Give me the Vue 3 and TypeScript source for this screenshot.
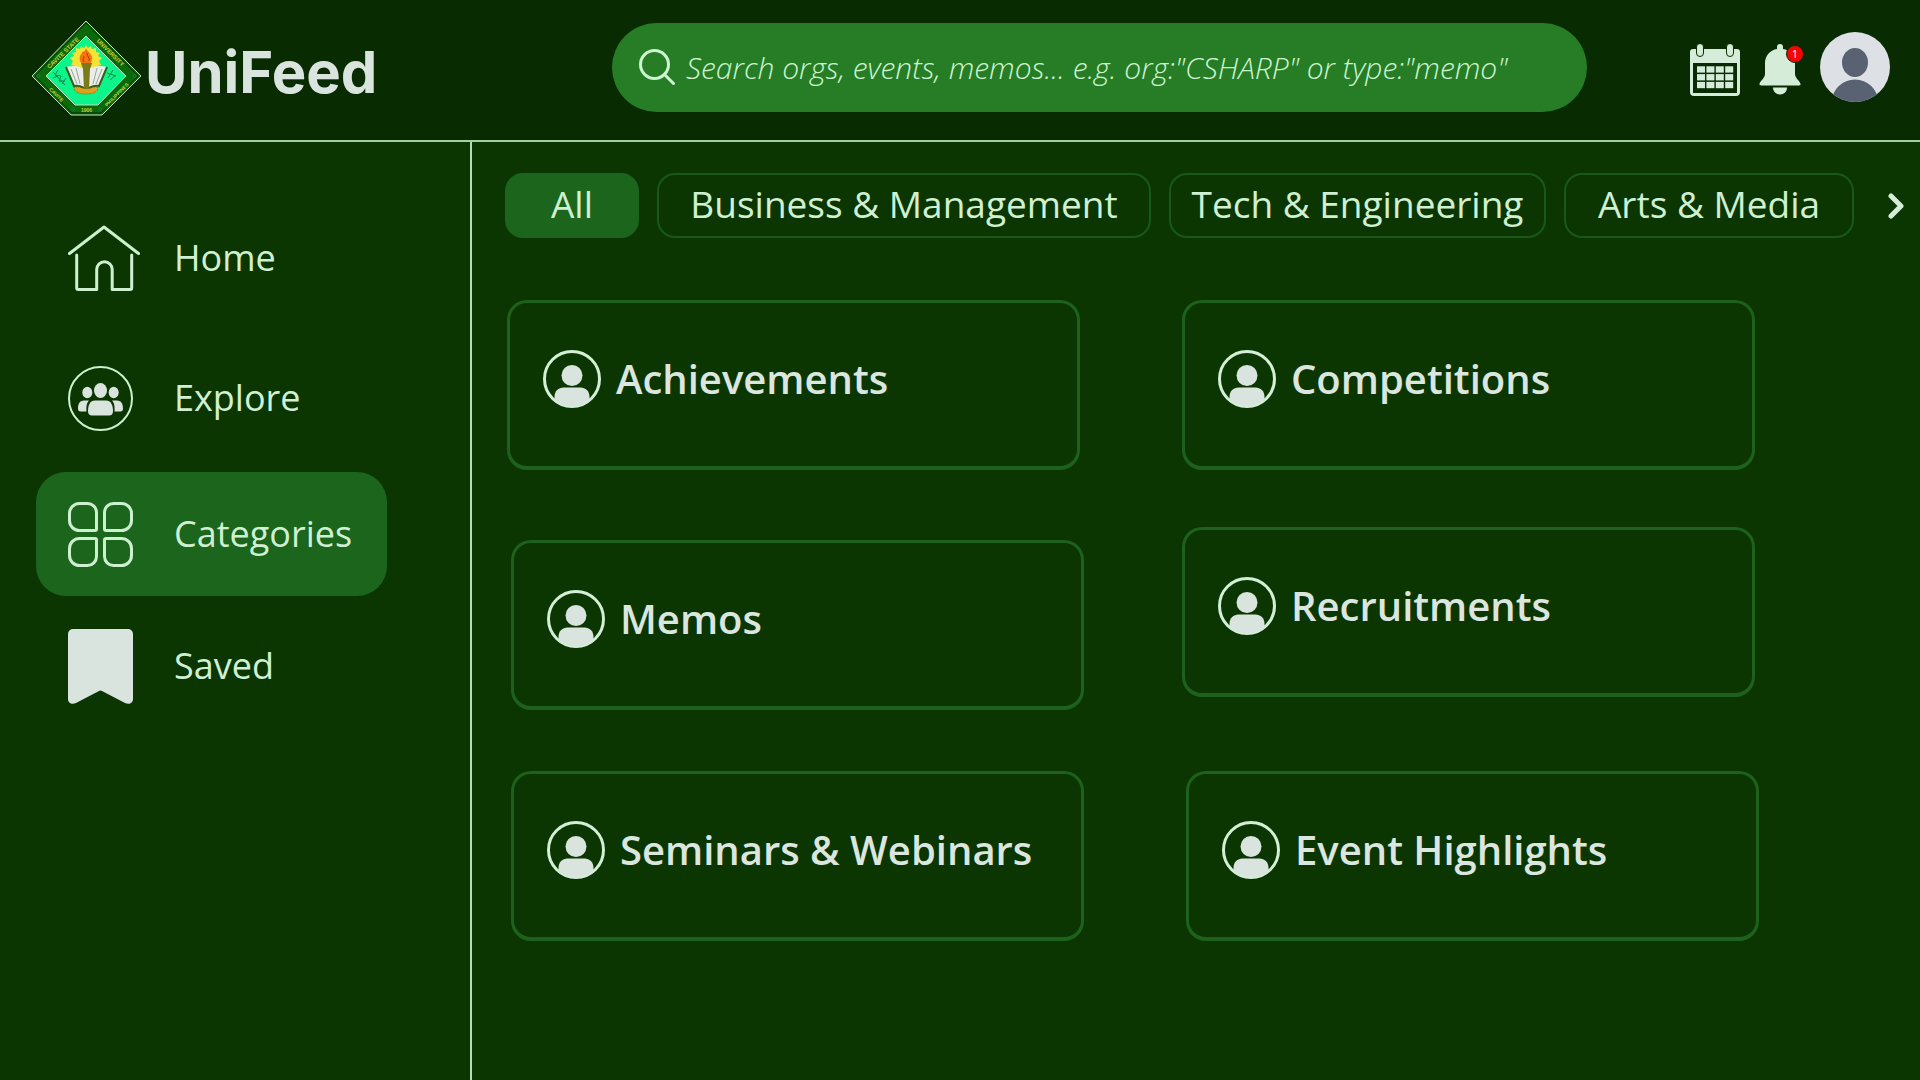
<script setup lang="ts">
import { ref } from 'vue'

interface NavItem {
  id: string
  label: string
}

interface Chip {
  label: string
  size: string
}

interface Category {
  label: string
  place: string
}

const query = ref('')
const activeNav = ref('categories')
const activeChip = ref('All')

const navItems: NavItem[] = [
  { id: 'home', label: 'Home' },
  { id: 'explore', label: 'Explore' },
  { id: 'categories', label: 'Categories' },
  { id: 'saved', label: 'Saved' },
]

const chips: Chip[] = [
  { label: 'All', size: 'xs' },
  { label: 'Business & Management', size: 'lg' },
  { label: 'Tech & Engineering', size: 'md' },
  { label: 'Arts & Media', size: 'sm' },
]

const categories: Category[] = [
  { label: 'Achievements', place: 'near' },
  { label: 'Competitions', place: 'near' },
  { label: 'Memos', place: 'far low' },
  { label: 'Recruitments', place: 'near' },
  { label: 'Seminars & Webinars', place: 'far low' },
  { label: 'Event Highlights', place: 'far low' },
]
</script>

<template>
  <div class="page">
    <header class="topbar">
      <a class="brand" href="#">
        <svg class="seal" viewBox="0 0 111 97" aria-hidden="true">
          <path d="M55 1 110 56 71 95H40L1 56Z" fill="#0a6a0a" stroke="#c9dcc4" stroke-width="1" />
          <path d="M55 3 107 56 70 93H41L4 56Z" fill="none" stroke="#042a04" stroke-width="1" />
          <path d="M55 16 95 56 67 85H44L15 56Z" fill="#0bf58a" stroke="#c9dcc4" stroke-width="1" />
          <g class="seal-text">
            <text transform="translate(33.500 34.500) rotate(-44)">CAVITE STATE</text>
            <text transform="translate(78 34) rotate(45)">UNIVERSITY</text>
            <text transform="translate(24 76) rotate(45)" class="small">CAVITE</text>
            <text transform="translate(87 76) rotate(-45)" class="small">PHILIPPINES</text>
            <text x="55.500" y="91.500" class="small">1906</text>
          </g>
          <g fill="none" stroke="#1a7a3a" stroke-width="1">
            <circle cx="7.500" cy="56" r="1.500" /><circle cx="103.500" cy="56" r="1.500" />
            <circle cx="42" cy="89" r="1.500" /><circle cx="69" cy="89" r="1.500" />
            <path d="m22 52 12 13M27 50l-3 5 6 1-2 5 6 0M22 58l5-2M35 58l-4 6M82 50l-5 8M76 53l9 3M79 60l6-5" stroke="#0f8a4a" />
          </g>
          <path d="M55 25l2 3 3-2 1 3 4-1v4l4 1-2 3 4 2-3 3 2 4-4 1v3l-5 0-6 3-6-3-5 0v-3l-4-1 2-4-3-3 4-2-2-3 4-1v-4l4 1 1-3 3 2Z" fill="#f5e234" />
          <path d="M55 28c1 4 6 5 6 10 0 3-1 5-2 6h-8c-2-2-3-5-2-8 1-2 2-2 2-4 2 0 3-1 4-4Z" fill="#f2760f" />
          <path d="M56 33c0 4 3 4 2 8M53 36c0 3-2 3 0 6" fill="none" stroke="#c92a0a" stroke-width="1" />
          <path d="M43 67h24c0 5-5 7-12 7s-12-2-12-7Z" fill="#e0a01c" stroke="#8a6a10" stroke-width="1" stroke-dasharray="1 1" />
          <path d="M35 47c7-2 13-1 18 2v18c-3-2-7-2-10-1ZM76 47c-7-2-13-1-18 2v18c3-2 7-2 10-1Z" fill="#e9eee9" />
          <path d="m35 47 8 19c4-1 7 0 10 2M76 47l-8 19c-4-1-7 0-10 2" fill="none" stroke="#3f5a1a" stroke-width="2" />
          <path d="m40 49 6 15M45 48l4 16M71 49l-6 15M66 48l-4 16" stroke="#9aa59a" stroke-width="1" />
          <path d="M50 43h11l-2 6-1 20h-5l-1-20Z" fill="#7a7a1c" />
        </svg>
        <span class="brand-name">UniFeed</span>
      </a>

      <form class="search" role="search" @submit.prevent>
        <label for="search-input" class="search-label" aria-label="Search">
          <svg viewBox="0 0 36 37" class="search-icon" aria-hidden="true">
            <circle cx="15.500" cy="15.500" r="14" />
            <path d="m25.500 25.500 9 9" />
          </svg>
        </label>
        <input
          id="search-input"
          v-model="query"
          type="text"
          placeholder="Search orgs, events, memos... e.g. org:&quot;CSHARP&quot; or type:&quot;memo&quot;"
        />
      </form>

      <div class="actions">
        <button type="button" class="icon-button small" aria-label="Calendar">
          <svg width="50" height="52" viewBox="0 0 50 52" aria-hidden="true">
            <path d="M3 5h44a3 3 0 0 1 3 3v11H0V8a3 3 0 0 1 3-3Z" fill="#d5ecd9" />
            <path d="M0 17h3v32h44V17h3v31a4 4 0 0 1-4 4H4a4 4 0 0 1-4-4Z" fill="#d5ecd9" />
            <g fill="#d5ecd9" stroke="#092b01" stroke-width="1">
              <rect x="6.500" y="-.500" width="7" height="13" rx="3.500" />
              <rect x="36.500" y="-.500" width="7" height="13" rx="3.500" />
            </g>
            <g fill="#d5ecd9">
              <template v-for="row in 3" :key="row">
                <rect
                  v-for="col in 4"
                  :key="col"
                  :x="7 + (col - 1) * 9.4"
                  :y="22.3 + (row - 1) * 7.8"
                  width="8"
                  height="6.300"
                />
              </template>
            </g>
          </svg>
        </button>
        <button type="button" class="icon-button small" aria-label="Notifications, 1 unread">
          <svg width="42" height="52" viewBox="0 0 42 52" aria-hidden="true">
            <path d="M18 5V3a3 3 0 0 1 6 0v2c7 1 12 7 12 14v11c0 4 5 7 5.500 10 .2 1-.5 1.500-1.500 1.500H2C1 41.500.3 41 .5 40 1 37 6 34 6 30V19c0-7 5-13 12-14Z" fill="#d5ecd9" />
            <path d="M14 43.500h14c0 4-3 7-7 7s-7-3-7-7Z" fill="#d5ecd9" />
          </svg>
          <span class="badge">1</span>
        </button>
        <button type="button" class="icon-button" aria-label="Profile">
          <svg width="70" height="70" viewBox="0 0 70 70" aria-hidden="true">
            <clipPath id="avatar-clip"><circle cx="35" cy="35" r="35" /></clipPath>
            <g clip-path="url(#avatar-clip)">
              <rect width="70" height="70" fill="#dde1e6" />
              <ellipse cx="35" cy="30.500" rx="13" ry="14.500" fill="#596273" />
              <ellipse cx="35" cy="69.500" rx="23" ry="22" fill="#596273" />
            </g>
          </svg>
        </button>
      </div>
    </header>

    <div class="body">
      <nav class="sidebar" aria-label="Main">
        <a
          v-for="item in navItems"
          :key="item.id"
          href="#"
          class="nav-link"
          :class="{ active: item.id === activeNav }"
          @click.prevent="activeNav = item.id"
        >
          <span class="nav-icon">
            <svg v-if="item.id === 'home'" class="line" width="72" height="66" viewBox="0 0 72 66" aria-hidden="true">
              <path d="M1.500 28.500 36 2l34.500 26.500M8.700 30v33a1.500 1.500 0 0 0 1.500 1.500h18.500v-20a7.700 7.700 0 0 1 15.500 0v20h18a1.500 1.500 0 0 0 1.500-1.500V30" />
            </svg>
            <svg v-else-if="item.id === 'explore'" width="65" height="65" viewBox="0 0 65 65" aria-hidden="true">
              <circle cx="32.500" cy="32.500" r="31.500" fill="none" stroke="#cdf0cf" stroke-width="2" />
              <g fill="#dae4df">
                <ellipse cx="19.300" cy="26.500" rx="5" ry="5.800" />
                <ellipse cx="45.700" cy="26.500" rx="5" ry="5.800" />
                <ellipse cx="32.500" cy="24.500" rx="6.500" ry="7.500" />
                <path d="M21 34.500c-2 2-3 5-2.500 11h-6c-1.500 0-2.500-1-2.500-2.500 0-5 1.500-8.500 6-8.500ZM44 34.500c2 2 3 5 2.500 11h6c1.500 0 2.500-1 2.500-2.500 0-5-1.500-8.500-6-8.500Z" />
                <path d="M27 34.500h11c5 0 7 5 7 10.500 0 3-1.500 4.500-4 4.500H24c-2.500 0-4-1.500-4-4.500 0-5.500 2-10.500 7-10.500Z" />
              </g>
            </svg>
            <svg v-else-if="item.id === 'categories'" class="line" width="65" height="65" viewBox="0 0 65 65" aria-hidden="true">
              <path d="M11.500 1.500h8a9 9 0 0 1 9 9v16.500a1.500 1.500 0 0 1-1.500 1.500H11.500a10 10 0 0 1-10-10v-7a10 10 0 0 1 10-10Z" />
              <path d="M53.500 1.500h-8a9 9 0 0 0-9 9v16.500a1.500 1.500 0 0 0 1.500 1.500h15.500a10 10 0 0 0 10-10v-7a10 10 0 0 0-10-10Z" />
              <path d="M11.500 63.500h8a9 9 0 0 0 9-9V38a1.500 1.500 0 0 0-1.500-1.500H11.500a10 10 0 0 0-10 10v7a10 10 0 0 0 10 10Z" />
              <path d="M53.500 63.500h-8a9 9 0 0 1-9-9V38a1.500 1.500 0 0 1 1.500-1.500h15.500a10 10 0 0 1 10 10v7a10 10 0 0 1-10 10Z" />
            </svg>
            <svg v-else width="65" height="75" viewBox="0 0 65 75" aria-hidden="true">
              <path d="M5 0h55a5 5 0 0 1 5 5v65c0 4-4 6-8 4L34 62q-1.500-1-3 0L8 74c-4 2-8 0-8-4V5a5 5 0 0 1 5-5Z" fill="#dae4df" />
            </svg>
          </span>
          <span>{{ item.label }}</span>
        </a>
      </nav>

      <main class="content">
        <div class="chips">
          <button
            v-for="chip in chips"
            :key="chip.label"
            type="button"
            class="chip"
            :class="[chip.size, { active: chip.label === activeChip }]"
            @click="activeChip = chip.label"
          >
            {{ chip.label }}
          </button>
          <button type="button" class="next" aria-label="More categories">
            <svg width="16" height="26" viewBox="0 0 16 26" aria-hidden="true">
              <path d="m3 3 10 10L3 23" fill="none" stroke="#d5ecd9" stroke-width="5" stroke-linecap="round" stroke-linejoin="round" />
            </svg>
          </button>
        </div>

        <div class="cards">
          <a v-for="category in categories" :key="category.label" href="#" class="card" :class="category.place">
            <svg width="58" height="58" viewBox="0 0 58 58" aria-hidden="true">
              <circle cx="29" cy="29" r="27.500" fill="none" stroke="#d3efd6" stroke-width="3" />
              <circle cx="29" cy="25.500" r="10.500" fill="#dae4df" />
              <path d="M11.500 50v-3c0-6 4-9.500 9-9.500h17c5 0 9 3.500 9 9.500v3a27.500 27.500 0 0 1-35 0Z" fill="#dae4df" />
            </svg>
            <span>{{ category.label }}</span>
          </a>
        </div>
      </main>
    </div>
  </div>
</template>

<style>
body {
  margin: 0;
  background: #0b3601;
}
</style>

<style scoped>
.page {
  display: flex;
  flex-direction: column;
  min-height: 100vh;
  background: #0b3601;
  color: #cff0d2;
  font-family: "Open Sans", "Noto Sans", sans-serif;
}

.page *,
.page {
  box-sizing: border-box;
}

a {
  color: inherit;
  text-decoration: none;
}

button {
  font: inherit;
  color: inherit;
  padding: 0;
  background: none;
  border: 0;
  cursor: pointer;
}

svg {
  display: block;
  flex: none;
}

.topbar {
  display: flex;
  align-items: flex-start;
  height: 142px;
  padding: 0 30px 0 31px;
  background: #092b01;
  border-bottom: 2px solid #a5cfa3;
}

.brand {
  display: flex;
  align-items: flex-end;
  flex: 0 0 581px;
  gap: 3px;
  padding-top: 20px;
}

.seal {
  width: 111px;
  height: 97px;
}

.seal-text {
  font-family: "Liberation Sans", sans-serif;
  font-size: 6px;
  font-weight: 700;
  fill: #c5cf3a;
  text-anchor: middle;
}

.seal-text .small {
  font-size: 5px;
}

.brand-name {
  font-family: Inter, sans-serif;
  font-size: 58px;
  line-height: 90px;
  font-weight: 700;
  color: #dae4df;
}

.search {
  display: flex;
  align-items: center;
  flex: 1;
  min-width: 0;
  height: 89px;
  margin-top: 23px;
  padding: 0 44px 0 27px;
  border-radius: 45px;
  background: #267d26;
}

.search-icon {
  width: 36px;
  height: 37px;
  fill: none;
  stroke: #cdf5d0;
  stroke-width: 3;
  stroke-linecap: round;
}

.search input {
  flex: 1;
  min-width: 0;
  margin-left: 11px;
  padding: 0;
  border: 0;
  outline: 0;
  background: none;
  font: italic 300 30px/40px "Open Sans", "Noto Sans", sans-serif;
  color: #cdf5d0;
}

.search input::placeholder {
  color: #cdf5d0;
  opacity: 1;
}

.actions {
  display: flex;
  align-items: center;
  flex: none;
  gap: 19px;
  height: 70px;
  margin: 32px 0 0 103px;
}

.icon-button {
  position: relative;
}

.icon-button.small {
  padding-top: 6px;
}

.badge {
  position: absolute;
  top: 7px;
  right: -3px;
  width: 18px;
  height: 18px;
  border: 1px solid #092b01;
  border-radius: 50%;
  background: #f50500;
  color: #fff;
  font-size: 11px;
  line-height: 16px;
  text-align: center;
}

.body {
  display: flex;
  flex: 1;
}

.sidebar {
  display: grid;
  grid-template-rows: 140px 140px 132px 132px;
  align-content: start;
  align-items: center;
  flex: 0 0 472px;
  padding: 46px 83px 0 36px;
  border-right: 2px solid #b5dcb5;
}

.nav-link {
  display: flex;
  align-items: center;
  height: 124px;
  gap: 34px;
  padding-left: 32px;
  border-radius: 30px;
  font-size: 36px;
  line-height: 48px;
}

.nav-link.active {
  background: #1c651d;
}

.nav-icon {
  flex: 0 0 72px;
}

.line {
  fill: none;
  stroke: #cdf0cf;
  stroke-width: 3;
  stroke-linecap: round;
  stroke-linejoin: round;
}

.content {
  flex: 1;
  min-width: 0;
  padding: 31px 0 0 33px;
}

.chips {
  display: flex;
  align-items: center;
  gap: 18px;
  padding-right: 16px;
}

.chip {
  height: 65px;
  padding-bottom: 4px;
  border: 2px solid #1a581a;
  border-radius: 18px;
  font-size: 37px;
  line-height: 48px;
  white-space: nowrap;
}

.chip.active {
  background: #1c651d;
  border-color: #1c651d;
}

.chip.xs {
  flex: 0 1 134px;
}

.chip.lg {
  flex: 0 1 494px;
}

.chip.md {
  flex: 0 1 377px;
}

.chip.sm {
  flex: 0 1 290px;
}

.next {
  margin-left: auto;
}

.cards {
  display: grid;
  grid-template-columns: 1fr 1fr;
  grid-template-rows: auto 183px 174px;
  gap: 57px 98px;
  padding: 62px 161px 60px 2px;
}

.card {
  display: flex;
  align-items: flex-start;
  align-self: start;
  width: calc(100% - 4px);
  height: 170px;
  gap: 15px;
  padding: 47px 20px 0 33px;
  border: 3px solid #1e611d;
  border-bottom-width: 4px;
  border-radius: 20px;
  color: #dae6df;
  font-size: 40px;
  line-height: 58px;
  font-weight: 600;
  white-space: nowrap;
}

.card.far {
  justify-self: end;
}

.card.low {
  align-self: end;
}
</style>
